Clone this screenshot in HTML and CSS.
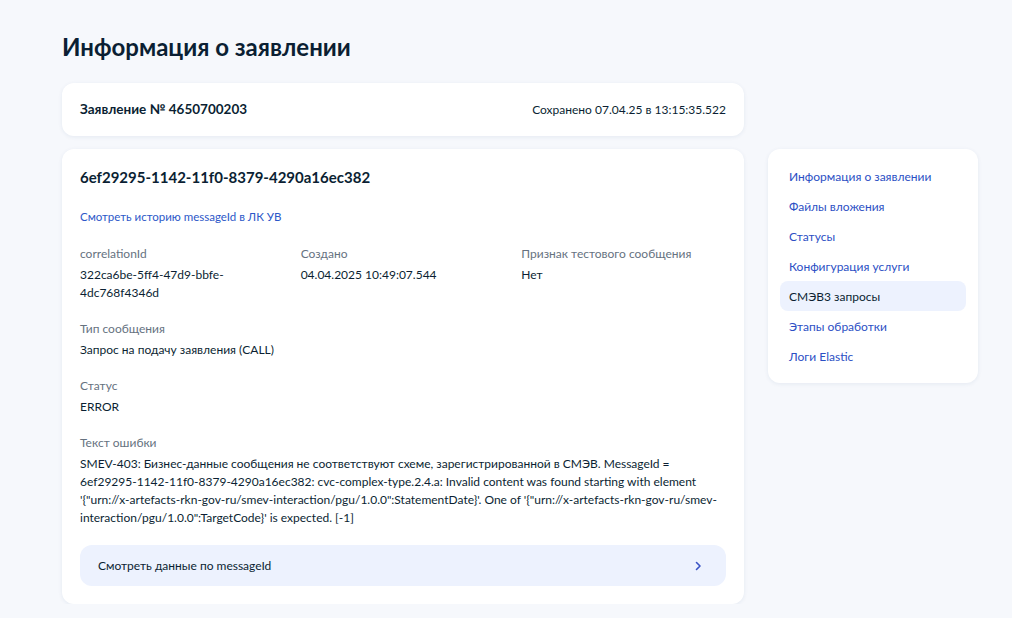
FILE: index.html
```html
<!DOCTYPE html>
<html lang="ru">
<head>
<meta charset="utf-8">
<title>Информация о заявлении</title>
<link rel="stylesheet" href="styles.css">
</head>
<body>
<div class="page">
  <h1 class="title">Информация о заявлении</h1>
  <div class="layout">
    <div class="main">
      <div class="card head-card">
        <div class="app-no">Заявление № 4650700203</div>
        <div class="saved">Сохранено 07.04.25 в 13:15:35.522</div>
      </div>
      <div class="card detail-card">
        <div class="msg-id">6ef29295-1142-11f0-8379-4290a16ec382</div>
        <a class="history-link" href="#">Смотреть историю messageId в ЛК УВ</a>
        <div class="grid3">
          <div class="field">
            <div class="label">correlationId</div>
            <div class="value">322ca6be-5ff4-47d9-bbfe-4dc768f4346d</div>
          </div>
          <div class="field">
            <div class="label">Создано</div>
            <div class="value">04.04.2025 10:49:07.544</div>
          </div>
          <div class="field">
            <div class="label">Признак тестового сообщения</div>
            <div class="value">Нет</div>
          </div>
        </div>
        <div class="field">
          <div class="label">Тип сообщения</div>
          <div class="value">Запрос на подачу заявления (CALL)</div>
        </div>
        <div class="field">
          <div class="label">Статус</div>
          <div class="value">ERROR</div>
        </div>
        <div class="field">
          <div class="label">Текст ошибки</div>
          <div class="value">SMEV-403: Бизнес-данные сообщения не соответствуют схеме, зарегистрированной в СМЭВ. MessageId = 6ef29295-1142-11f0-8379-4290a16ec382: cvc-complex-type.2.4.a: Invalid content was found starting with element '{"urn://x-artefacts-rkn-gov-ru/smev-interaction/pgu/1.0.0":StatementDate}'. One of '{"urn://x-artefacts-rkn-gov-ru/smev-interaction/pgu/1.0.0":TargetCode}' is expected. [-1]</div>
        </div>
        <a class="data-btn" href="#">
          <span>Смотреть данные по messageId</span>
          <svg class="chev" width="8" height="10" viewBox="0 0 8 10"><polyline points="2.5,1.5 6,5 2.5,8.5" fill="none" stroke="#3a53c5" stroke-width="1.6" stroke-linecap="round" stroke-linejoin="round"/></svg>
        </a>
      </div>
    </div>
    <nav class="card side">
      <a class="nav-item" href="#">Информация о заявлении</a>
      <a class="nav-item" href="#">Файлы вложения</a>
      <a class="nav-item" href="#">Статусы</a>
      <a class="nav-item" href="#">Конфигурация услуги</a>
      <a class="nav-item active" href="#">СМЭВ3 запросы</a>
      <a class="nav-item" href="#">Этапы обработки</a>
      <a class="nav-item" href="#">Логи Elastic</a>
    </nav>
  </div>
</div>
</body>
</html>
```
FILE: styles.css
```css
* { box-sizing: border-box; }
html, body { margin: 0; padding: 0; }
body {
  background: #f6f8fc;
  font-family: Lato, "Noto Sans", sans-serif;
  color: #0b1f33;
  font-size: 12px;
}
a { text-decoration: none; }
.page {
  padding: 31px 34px 0 62px;
}
.title {
  margin: 0 0 20px;
  font-size: 24px;
  line-height: 32px;
  font-weight: 700;
}
.layout {
  display: flex;
  align-items: flex-start;
  gap: 24px;
}
.main {
  width: 682px;
  display: flex;
  flex-direction: column;
  gap: 13px;
}
.layout .side { margin-top: 66px; }
.card {
  background: #fff;
  border-radius: 12px;
  box-shadow: 0 1px 4px rgba(30, 60, 120, 0.08);
}
.head-card {
  display: flex;
  justify-content: space-between;
  align-items: center;
  padding: 17px 18px;
  line-height: 19px;
}
.app-no { font-size: 13.5px; font-weight: 700; }
.saved { font-size: 12px; }
.detail-card {
  padding: 18px 18px 18px;
  display: flex;
  flex-direction: column;
}
.msg-id {
  font-size: 15px;
  font-weight: 700;
  line-height: 20px;
}
.history-link {
  margin-top: 21px;
  color: #2c58c8;
  font-size: 11.5px;
  line-height: 18px;
  align-self: flex-start;
}
.grid3 {
  display: grid;
  grid-template-columns: 1fr 1fr 1fr;
  gap: 16px;
  margin-top: 20px;
}
.grid3 .field { margin-top: 0; }
.field { margin-top: 19px; }
.label {
  color: #66727f;
  font-size: 12px;
  line-height: 16px;
  margin-bottom: 4px;
}
.value {
  font-size: 12px;
  line-height: 18px;
}
.data-btn {
  margin-top: 18px;
  display: flex;
  justify-content: space-between;
  align-items: center;
  height: 41px;
  padding: 0 24px 0 18px;
  background: #edf2fe;
  border-radius: 12px;
  color: #0b1f33;
  font-size: 12px;
}
.side {
  width: 210px;
  padding: 12px;
  display: flex;
  flex-direction: column;
}
.nav-item {
  display: flex;
  align-items: center;
  height: 30px;
  padding: 0 9px;
  border-radius: 8px;
  color: #2c4fc4;
  font-size: 12px;
}
.nav-item.active {
  background: #edf2fe;
  color: #0b1f33;
}
```
